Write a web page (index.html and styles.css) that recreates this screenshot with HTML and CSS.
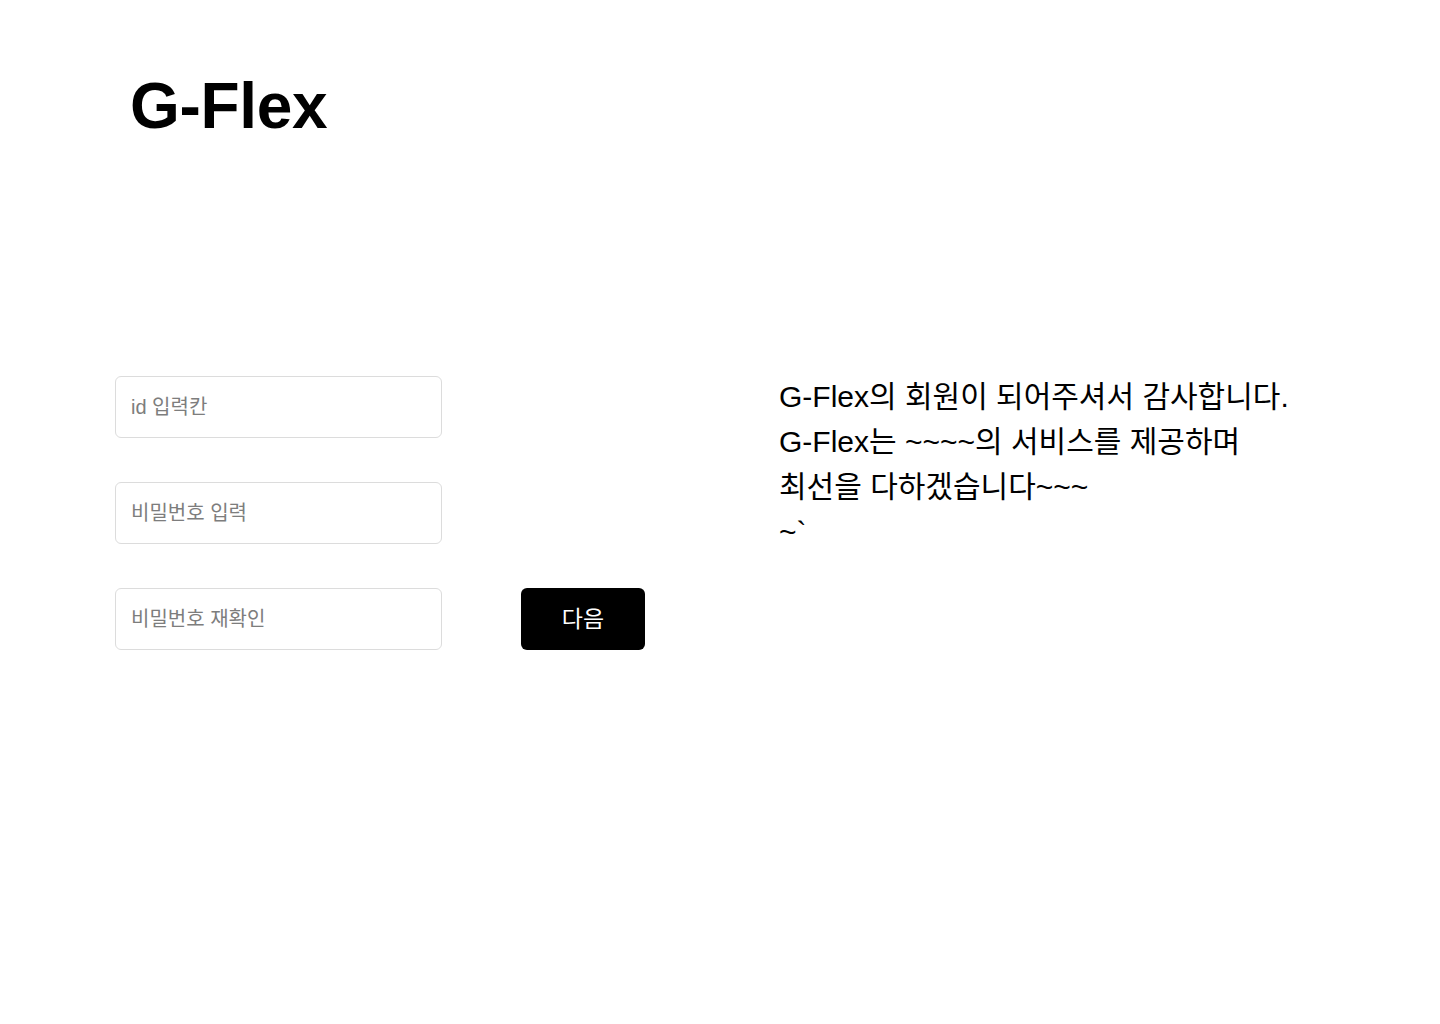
FILE: index.html
```html
<!DOCTYPE html>
<html lang="ko">
<head>
<meta charset="utf-8">
<title>G-Flex 회원가입</title>
<link rel="stylesheet" href="styles.css">
</head>
<body>
<header class="header">
  <h1 class="logo">G-Flex</h1>
</header>
<main class="main">
  <form class="signup">
    <div class="fields">
      <input class="field" type="text" placeholder="id 입력칸">
      <input class="field" type="password" placeholder="비밀번호 입력">
      <input class="field" type="password" placeholder="비밀번호 재확인">
    </div>
    <button class="next" type="button">다음</button>
  </form>
  <p class="welcome">G-Flex의 회원이 되어주셔서 감사합니다.<br>G-Flex는 ~~~~의 서비스를 제공하며<br>최선을 다하겠습니다~~~<br>~`</p>
</main>
</body>
</html>
```
FILE: styles.css
```css
* { box-sizing: border-box; }
html, body {
  margin: 0;
  padding: 0;
  background: #ffffff;
  color: #000000;
  font-family: "Liberation Sans", "Noto Sans CJK KR", Arial, sans-serif;
}
.header {
  padding: 74px 0 0 130px;
}
.logo {
  margin: 0;
  font-size: 64px;
  line-height: 64px;
  font-weight: 700;
  letter-spacing: -0.3px;
}
.main {
  display: flex;
  align-items: flex-start;
  padding: 238px 0 0 115px;
}
.signup {
  display: flex;
  align-items: flex-end;
  gap: 79px;
}
.fields {
  display: flex;
  flex-direction: column;
  gap: 44px;
}
.field {
  width: 327px;
  height: 62px;
  border: 1px solid #dcdcdc;
  border-radius: 6px;
  padding: 0 15px;
  font-family: "Liberation Sans", "Noto Sans CJK KR", Arial, sans-serif;
  font-size: 20px;
  color: #222;
  background: #fff;
  outline: none;
}
.field::placeholder {
  color: #7d7d7d;
}
.next {
  width: 124px;
  height: 62px;
  padding: 0 0 4px;
  border: none;
  border-radius: 6px;
  background: #000;
  color: #fff;
  font-family: "Liberation Sans", "Noto Sans CJK KR", Arial, sans-serif;
  font-size: 23px;
  cursor: pointer;
}
.welcome {
  margin: -2px 0 0 134px;
  font-size: 30px;
  line-height: 45px;
}
```
